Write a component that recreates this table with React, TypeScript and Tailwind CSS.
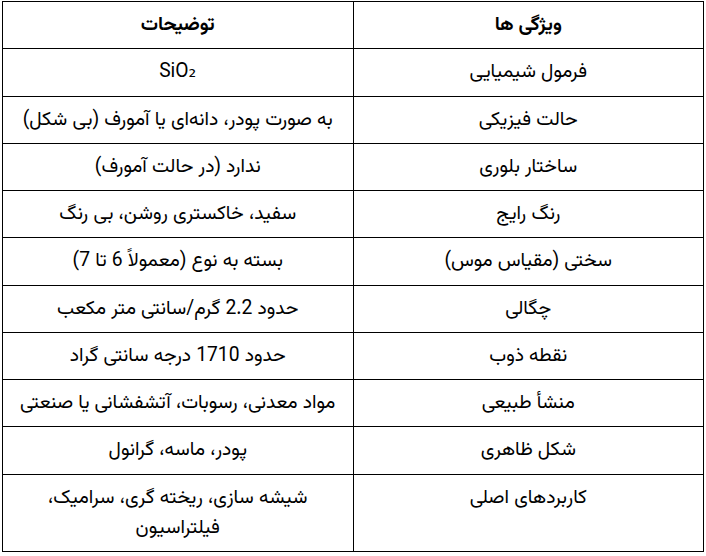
import React from "react";

const rows: [string, React.ReactNode][] = [
  ["فرمول شیمیایی", "SiO₂"],
  ["حالت فیزیکی", "به صورت پودر، دانه‌ای یا آمورف (بی شکل)"],
  ["ساختار بلوری", "ندارد (در حالت آمورف)"],
  ["رنگ رایج", "سفید، خاکستری روشن، بی رنگ"],
  ["سختی (مقیاس موس)", "بسته به نوع (معمولاً 6 تا 7)"],
  ["چگالی", "حدود 2.2 گرم/سانتی متر مکعب"],
  ["نقطه ذوب", "حدود 1710 درجه سانتی گراد"],
  ["منشأ طبیعی", "مواد معدنی، رسوبات، آتشفشانی یا صنعتی"],
  ["شکل ظاهری", "پودر، ماسه، گرانول"],
  [
    "کاربردهای اصلی",
    <>
      شیشه سازی، ریخته گری، سرامیک،
      <br />
      فیلتراسیون
    </>,
  ],
];

export default function App() {
  return (
    <div
      className="bg-white pt-px pl-[2px] text-black"
      style={{ fontFamily: '"Vazirmatn", "Noto Sans Arabic", "Noto Naskh Arabic", "DejaVu Sans", sans-serif' }}
    >
      <table dir="rtl" className="w-[702px] table-fixed border-collapse text-[19.3px] leading-[30.25px]">
        <thead>
          <tr>
            <th className="w-1/2 border border-black px-2 py-2 text-center align-top font-bold">ویژگی ها</th>
            <th className="w-1/2 border border-black px-2 py-2 text-center align-top font-bold">توضیحات</th>
          </tr>
        </thead>
        <tbody>
          {rows.map(([k, v], i) => (
            <tr key={i}>
              <td className="border border-black px-2 py-2 text-center align-top">{k}</td>
              <td className="border border-black px-2 py-2 text-center align-top">{v}</td>
            </tr>
          ))}
        </tbody>
      </table>
    </div>
  );
}
